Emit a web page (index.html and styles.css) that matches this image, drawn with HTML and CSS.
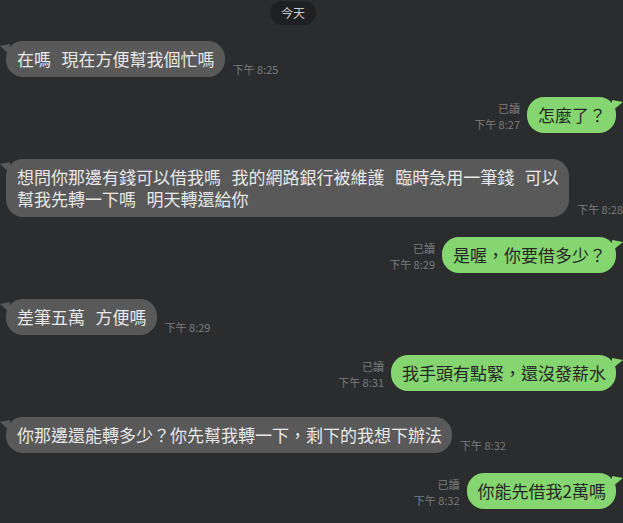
FILE: index.html
```html
<!DOCTYPE html>
<html lang="zh-Hant">
  <head>
    <meta charset="UTF-8" />
    <meta name="viewport" content="width=device-width, initial-scale=1.0" />
    <title>聊天</title>
    <link rel="stylesheet" href="styles.css">
  </head>
  <body>
    <div class="chat">
      <div class="date-row">
        <span class="date-pill">今天</span>
      </div>

      <div class="row left first">
        <div class="bubble">在嗎  現在方便幫我個忙嗎</div>
        <span class="time">下午 8:25</span>
      </div>

      <div class="row right">
        <div class="meta">
          <span>已讀</span>
          <span>下午 8:27</span>
        </div>
        <div class="bubble">怎麼了？</div>
      </div>

      <div class="row left">
        <div class="bubble">想問你那邊有錢可以借我嗎  我的網路銀行被維護  臨時急用一筆錢  可以幫我先轉一下嗎  明天轉還給你</div>
        <span class="time">下午 8:28</span>
      </div>

      <div class="row right">
        <div class="meta">
          <span>已讀</span>
          <span>下午 8:29</span>
        </div>
        <div class="bubble">是喔，你要借多少？</div>
      </div>

      <div class="row left">
        <div class="bubble">差筆五萬  方便嗎</div>
        <span class="time">下午 8:29</span>
      </div>

      <div class="row right">
        <div class="meta">
          <span>已讀</span>
          <span>下午 8:31</span>
        </div>
        <div class="bubble">我手頭有點緊，還沒發薪水</div>
      </div>

      <div class="row left">
        <div class="bubble">你那邊還能轉多少？你先幫我轉一下，剩下的我想下辦法</div>
        <span class="time">下午 8:32</span>
      </div>

      <div class="row right">
        <div class="meta">
          <span>已讀</span>
          <span>下午 8:32</span>
        </div>
        <div class="bubble">你能先借我2萬嗎</div>
      </div>
    </div>
  </body>
</html>
```

FILE: styles.css
```css
body {
  margin: 0;
  padding: 0;
  background-color: #2b2c2e;
  font-family: "Noto Sans CJK TC", "Noto Sans", sans-serif;
  overflow: hidden;
}
.chat {
  display: flex;
  flex-direction: column;
  padding-top: 1px;
}
.date-row {
  display: flex;
  padding-left: 270px;
}
.date-pill {
  width: 46px;
  height: 24px;
  line-height: 24px;
  text-align: center;
  font-size: 12px;
  color: #c9c9c9;
  background-color: #1f2022;
  border-radius: 12px;
}
.row {
  display: flex;
  align-items: flex-end;
  margin-top: 20px;
}
.row.left {
  margin-top: 26px;
  padding-left: 6px;
}
.row.left.first {
  margin-top: 16px;
}
.row.right {
  justify-content: flex-end;
  padding-right: 7px;
}
.bubble {
  position: relative;
  max-width: 545px;
  padding: 7px 10px 7px 11px;
  font-size: 17px;
  line-height: 22px;
  border-radius: 17px;
  white-space: pre-wrap;
  word-spacing: 1.5px;
}
.left .bubble {
  background-color: #595959;
  color: #e8e8e8;
}
.right .bubble {
  background-color: #85d670;
  color: #262626;
}
.left .bubble::before {
  content: "";
  position: absolute;
  left: -6px;
  top: 3px;
  width: 10px;
  height: 11px;
  background-color: #595959;
  clip-path: polygon(0 18%, 100% 0, 100% 100%);
}
.right .bubble::before {
  content: "";
  position: absolute;
  right: -7px;
  top: 3px;
  width: 11px;
  height: 11px;
  background-color: #85d670;
  clip-path: polygon(100% 18%, 0 0, 0 100%);
}
.time {
  margin-left: 8px;
  margin-bottom: 1px;
  font-size: 11px;
  line-height: 14px;
  color: #7d7d7d;
  white-space: nowrap;
}
.meta {
  display: flex;
  flex-direction: column;
  align-items: flex-end;
  margin-right: 7px;
  margin-bottom: 1px;
  font-size: 11px;
  line-height: 16px;
  color: #7d7d7d;
  white-space: nowrap;
}
```
